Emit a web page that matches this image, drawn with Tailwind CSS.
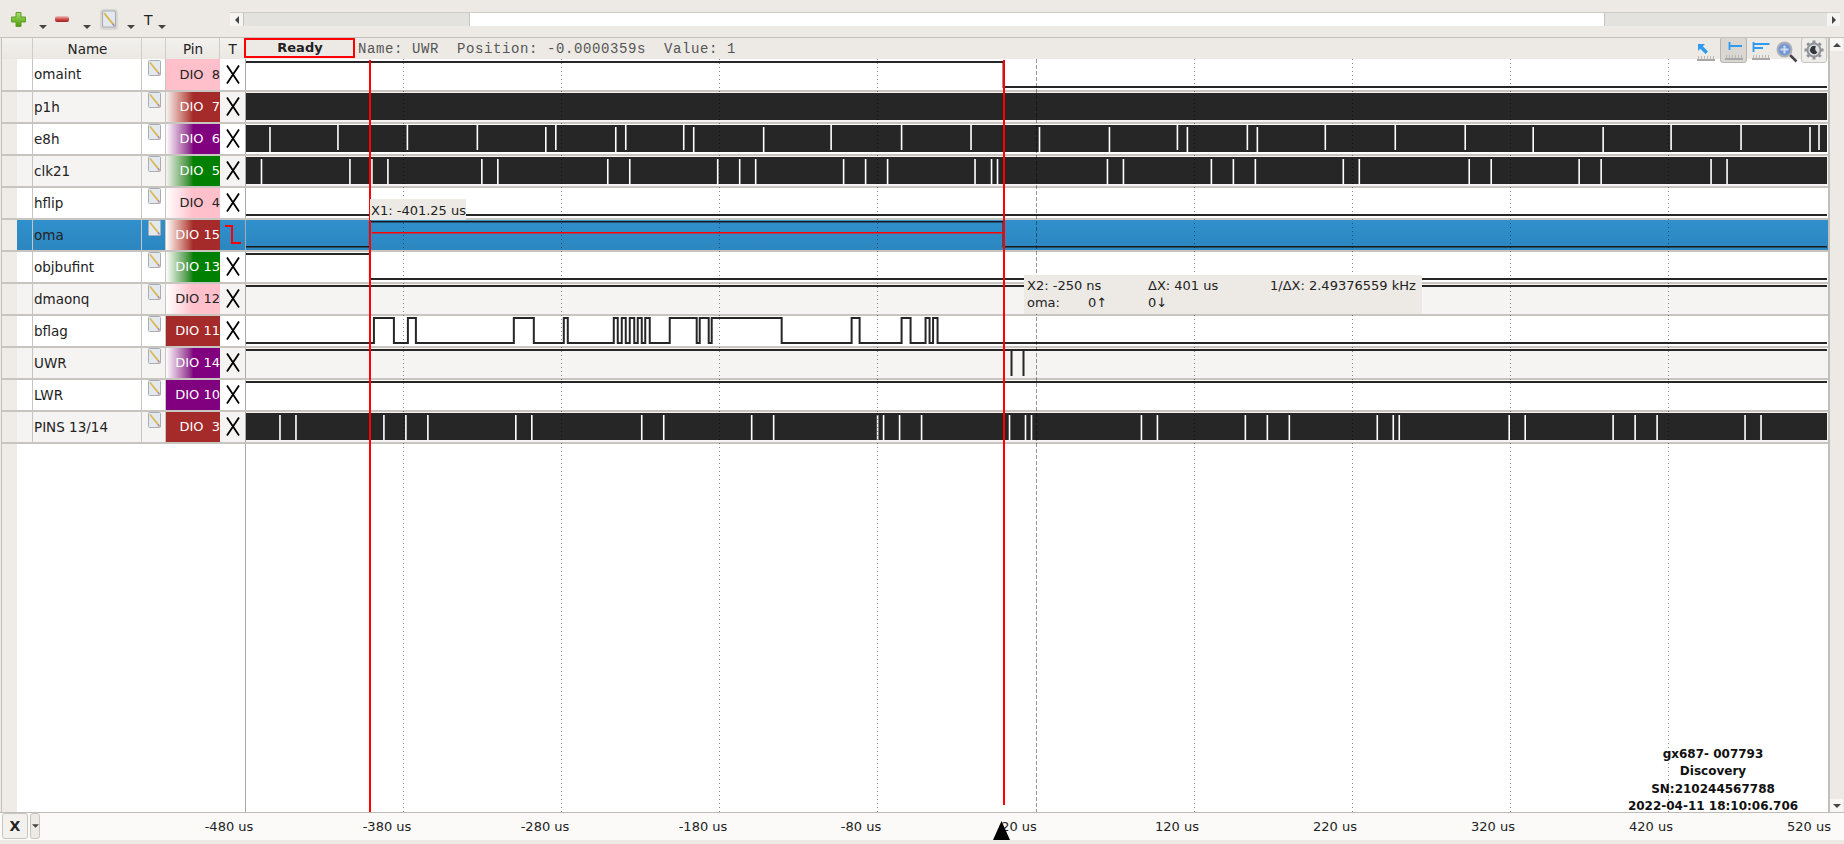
<!DOCTYPE html>
<html lang="en">
<head>
  <meta charset="UTF-8">
  <title>Logic analyzer</title>
  <script src="https://cdn.jsdelivr.net/npm/@tailwindcss/browser@4"></script>
</head>
<body class="w-[1844px] h-[844px] overflow-hidden bg-[#edeae5] text-[#222] font-['DejaVu_Sans',sans-serif]">
  <!-- shared icons -->
  <svg class="absolute w-0 h-0">
    <defs>
      <linearGradient id="gplus" x1="0" y1="0" x2="0" y2="1"><stop offset="0" stop-color="#a6e06a"/><stop offset="1" stop-color="#4e9a06"/></linearGradient>
      <linearGradient id="gminus" x1="0" y1="0" x2="0" y2="1"><stop offset="0" stop-color="#f0c8c8"/><stop offset=".5" stop-color="#d05050"/><stop offset="1" stop-color="#a02020"/></linearGradient>
      <symbol id="note" viewBox="0 0 13 16">
        <rect x=".5" y=".5" width="12" height="15" rx="1" fill="#e3e9ee" stroke="#a9adb3"/>
        <path d="M2 2.5 10.5 13" stroke="#d9b94e" stroke-width="1.8"/>
        <path d="M10 12.5 11.5 14.5" stroke="#a98ab0" stroke-width="1.5"/>
      </symbol>
      <symbol id="x" viewBox="0 0 14 19">
        <path d="M1 0.500 13 18.500M13 0.500 1 18.500" stroke="#000" stroke-width="1.8" fill="none"/>
      </symbol>
      <symbol id="ruler" viewBox="0 0 18 5">
        <rect x="0" y="3" width="18" height="2" fill="#a8a8a8"/>
        <path d="M1.500 0V3M4.500 0V3M7.500 0V3M10.500 0V3M13.500 0V3M16.500 0V3" stroke="#b8b8b8"/>
      </symbol>
      <symbol id="drop" viewBox="0 0 8 4"><path d="M0 0H8L4 4Z" fill="#444"/></symbol>
    </defs>
  </svg>

  <!-- toolbar -->
  <div class="flex h-[37px]">
    <div class="flex w-[230px] shrink-0 items-center">
      <svg class="ml-[11px] w-[15px] h-[15px] shrink-0 mt-[1px]" viewBox="0 0 15 15"><path d="M5 .5H10V5H14.500V10H10V14.500H5V10H.5V5H5Z" fill="url(#gplus)" stroke="#5f9e2a"/></svg>
      <svg class="ml-[13px] w-[8px] h-[4px] mt-[17px] shrink-0"><use href="#drop"/></svg>
      <svg class="ml-[8px] w-[14px] h-[6px] mt-[1px] shrink-0" viewBox="0 0 14 6"><rect width="14" height="6" rx="2" fill="url(#gminus)"/></svg>
      <svg class="ml-[14px] w-[8px] h-[4px] mt-[17px] shrink-0"><use href="#drop"/></svg>
      <div class="ml-[9px] w-[18px] h-[21px] shrink-0 mt-[1px] rounded-sm bg-[#dad7d2] flex items-center justify-center">
        <svg class="w-[14px] h-[18px]"><use href="#note"/></svg>
      </div>
      <svg class="ml-[9px] w-[8px] h-[4px] mt-[17px] shrink-0"><use href="#drop"/></svg>
      <span class="ml-[9px] w-[9px] text-sm leading-none mt-[2px]">T</span>
      <svg class="ml-[5px] w-[8px] h-[4px] mt-[17px] shrink-0"><use href="#drop"/></svg>
    </div>
    <div class="mt-[12px] flex h-[14px] w-[1610px] border-t border-[#cfccc7]">
      <div class="flex w-[13px] items-center justify-center bg-[#f5f4f2]"><svg class="w-[4px] h-[8px]" viewBox="0 0 4 8"><path d="M4 0V8L0 4Z" fill="#444"/></svg></div>
      <div class="w-[227px] bg-[#e3e2de] border-l border-r border-[#c8c5c0]"></div>
      <div class="w-[1134px] bg-white"></div>
      <div class="flex-1 bg-[#e3e2de] border-l border-[#c8c5c0]"></div>
      <div class="flex w-[13px] items-center justify-center bg-[#f5f4f2]"><svg class="w-[4px] h-[8px]" viewBox="0 0 4 8"><path d="M0 0V8L4 4Z" fill="#444"/></svg></div>
    </div>
  </div>

  <!-- main area -->
  <div class="flex h-[775px] border-t border-[#c4c1bc]">
    <div class="relative w-[1827px] h-[774px] ml-px border-l border-[#c4c1bc] bg-white overflow-hidden">
      <!-- header -->
      <div class="flex h-[21px] text-[13px] bg-[#edeae5]">
        <div class="w-[31px] border-r border-[#d0cdc8] bg-linear-to-b from-[#f3f1ee] to-[#ebe8e3]"></div>
        <div class="w-[109px] border-r border-[#d0cdc8] bg-linear-to-b from-[#f3f1ee] to-[#ebe8e3] pl-px text-center text-[13.5px] leading-[22px]">Name</div>
        <div class="w-[24px] border-r border-[#d0cdc8] bg-linear-to-b from-[#f3f1ee] to-[#ebe8e3]"></div>
        <div class="w-[54px] border-r border-[#d0cdc8] bg-linear-to-b from-[#f3f1ee] to-[#ebe8e3] pl-px text-center text-[13.5px] leading-[22px]">Pin</div>
        <div class="w-[24px] bg-linear-to-b from-[#f3f1ee] to-[#ebe8e3] pl-px text-center text-[13.5px] leading-[22px]">T</div>
        <div class="w-[111px] h-[20px] border-2 border-[#f00] pl-px text-center font-bold leading-[16px]">Ready</div>
        <div class="ml-[3px] font-['Liberation_Mono',monospace] text-[14px] tracking-[0.6px] whitespace-pre leading-[22px] text-[#555]">Name: UWR  Position: -0.0000359s  Value: 1</div>
      </div>

      <!-- rows -->
      <div class="flex h-[33px] border-b-2 border-[#c8c5c0] bg-white">
        <div class="w-[15px] bg-[#efebe7]"></div><div class="w-[16px] border-r border-[#c8c5c0]"></div>
        <div class="w-[109px] border-r border-[#c8c5c0] pl-px text-[13.5px] leading-[31px]">omaint</div>
        <div class="w-[24px] border-r border-[#c8c5c0] pl-[6px] pt-px"><svg class="w-[13px] h-[16px]"><use href="#note"/></svg></div>
        <div class="w-[54px] bg-[#ffc0cb] text-right text-[13px] leading-[31px] whitespace-pre">DIO  8</div>
        <div class="w-[25px] pl-[6px] pt-[6px]"><svg class="w-[14px] h-[19px]"><use href="#x"/></svg></div>
        <svg class="w-[1582px] border-l border-[#aaa]" viewBox="245 59 1582 31"><path d="M245 62H1003V87H1827" fill="none" stroke="#262626" stroke-width="2"/></svg>
      </div>
      <div class="flex h-[32px] border-b-2 border-[#c8c5c0] bg-[#f5f4f2]">
        <div class="w-[15px] bg-[#efebe7]"></div><div class="w-[16px] border-r border-[#c8c5c0]"></div>
        <div class="w-[109px] border-r border-[#c8c5c0] pl-px text-[13.5px] leading-[30px]">p1h</div>
        <div class="w-[24px] border-r border-[#c8c5c0] pl-[6px]"><svg class="w-[13px] h-[16px]"><use href="#note"/></svg></div>
        <div class="w-[54px] bg-linear-to-r from-[#f5f4f2] to-[#a52a2a] to-50% text-white text-right text-[13px] leading-[30px] whitespace-pre">DIO  7</div>
        <div class="w-[25px] pl-[6px] pt-[5px]"><svg class="w-[14px] h-[19px]"><use href="#x"/></svg></div>
        <svg class="w-[1582px] border-l border-[#aaa]" viewBox="245 92 1582 30"><rect x="245" y="93" width="1582" height="27" fill="#262626"/></svg>
      </div>
      <div class="flex h-[32px] border-b-2 border-[#c8c5c0] bg-white">
        <div class="w-[15px] bg-[#efebe7]"></div><div class="w-[16px] border-r border-[#c8c5c0]"></div>
        <div class="w-[109px] border-r border-[#c8c5c0] pl-px text-[13.5px] leading-[30px]">e8h</div>
        <div class="w-[24px] border-r border-[#c8c5c0] pl-[6px]"><svg class="w-[13px] h-[16px]"><use href="#note"/></svg></div>
        <div class="w-[54px] bg-linear-to-r from-white to-[#800080] to-50% text-white text-right text-[13px] leading-[30px] whitespace-pre">DIO  6</div>
        <div class="w-[25px] pl-[6px] pt-[5px]"><svg class="w-[14px] h-[19px]"><use href="#x"/></svg></div>
        <svg class="w-[1582px] border-l border-[#aaa]" viewBox="245 124 1582 30">
          <rect x="245" y="125" width="1582" height="27" fill="#262626"/>
          <path d="M337 125V150M406.500 125V150M476.500 125V150M555 125V150M625 125V150M683 125V150M830.500 125V150M901 125V150M970.500 125V150M1177 125V150M1247 125V150M1325 125V150M1395 125V150M1465 125V150M1671 125V150M1741 125V150M1819 125V150" stroke="#fff" stroke-width="1.6"/>
          <path d="M269 127V152M545 127V152M615 127V152M693 127V152M763 127V152M1039 127V152M1109 127V152M1187 127V152M1257 127V152M1533 127V152M1603 127V152M1810 127V152" stroke="#fff" stroke-width="1.6"/>
        </svg>
      </div>
      <div class="flex h-[32px] border-b-2 border-[#c8c5c0] bg-[#f5f4f2]">
        <div class="w-[15px] bg-[#efebe7]"></div><div class="w-[16px] border-r border-[#c8c5c0]"></div>
        <div class="w-[109px] border-r border-[#c8c5c0] pl-px text-[13.5px] leading-[30px]">clk21</div>
        <div class="w-[24px] border-r border-[#c8c5c0] pl-[6px]"><svg class="w-[13px] h-[16px]"><use href="#note"/></svg></div>
        <div class="w-[54px] bg-linear-to-r from-[#f5f4f2] to-[#008000] to-50% text-white text-right text-[13px] leading-[30px] whitespace-pre">DIO  5</div>
        <div class="w-[25px] pl-[6px] pt-[5px]"><svg class="w-[14px] h-[19px]"><use href="#x"/></svg></div>
        <svg class="w-[1582px] border-l border-[#aaa]" viewBox="245 156 1582 30">
          <rect x="245" y="157" width="1582" height="27" fill="#262626"/>
          <path d="M260.500 159V184M349 159V184M371 159V184M387 159V184M481 159V184M497 159V184M607 159V184M629 159V184M717 159V184M739 159V184M755 159V184M843 159V184M865 159V184M887 159V184M974.500 159V184M991 159V184M997 159V184M1107 159V184M1123 159V184M1211 159V184M1233 159V184M1255 159V184M1343 159V184M1359 159V184M1469 159V184M1491 159V184M1579 159V184M1601 159V184M1711 159V184M1727 159V184" stroke="#fff" stroke-width="1.6"/>
        </svg>
      </div>
      <div class="flex h-[32px] border-b-2 border-[#c8c5c0] bg-white">
        <div class="w-[15px] bg-[#efebe7]"></div><div class="w-[16px] border-r border-[#c8c5c0]"></div>
        <div class="w-[109px] border-r border-[#c8c5c0] pl-px text-[13.5px] leading-[30px]">hflip</div>
        <div class="w-[24px] border-r border-[#c8c5c0] pl-[6px]"><svg class="w-[13px] h-[16px]"><use href="#note"/></svg></div>
        <div class="w-[54px] bg-linear-to-r from-white to-[#ffc0cb] to-50% text-right text-[13px] leading-[30px] whitespace-pre">DIO  4</div>
        <div class="w-[25px] pl-[6px] pt-[5px]"><svg class="w-[14px] h-[19px]"><use href="#x"/></svg></div>
        <svg class="w-[1582px] border-l border-[#aaa]" viewBox="245 188 1582 30"><path d="M245 215H1827" stroke="#262626" stroke-width="2"/></svg>
      </div>
      <div class="flex h-[32px] border-b-2 border-[#c8c5c0] bg-linear-to-b from-[#3090cc] to-[#2c86c0]">
        <div class="w-[15px] bg-[#efebe7]"></div><div class="w-[16px] border-r border-[#c8c5c0]"></div>
        <div class="w-[109px] border-r border-[#c8c5c0] pl-px text-[13.5px] leading-[30px]">oma</div>
        <div class="w-[24px] border-r border-[#c8c5c0] pl-[6px]"><svg class="w-[13px] h-[16px]"><use href="#note"/></svg></div>
        <div class="w-[54px] bg-linear-to-r from-white to-[#a52a2a] to-50% text-white text-right text-[13px] leading-[30px] whitespace-pre">DIO 15</div>
        <svg class="w-[25px]" viewBox="220 220 25 30"><path d="M225 226H232V243H241" fill="none" stroke="#f00" stroke-width="2"/></svg>
        <svg class="w-[1582px] border-l border-[#aaa]" viewBox="245 220 1582 30">
          <path d="M245 246.750H368.750V221.750H1002.750V246.750H1827" fill="none" stroke="#1a1a1a" stroke-width="1.500"/>
          <path d="M371 232.750H1003" stroke="#f00" stroke-width="1.500"/>
        </svg>
      </div>
      <div class="flex h-[32px] border-b-2 border-[#c8c5c0] bg-white">
        <div class="w-[15px] bg-[#efebe7]"></div><div class="w-[16px] border-r border-[#c8c5c0]"></div>
        <div class="w-[109px] border-r border-[#c8c5c0] pl-px text-[13.5px] leading-[30px]">objbufint</div>
        <div class="w-[24px] border-r border-[#c8c5c0] pl-[6px]"><svg class="w-[13px] h-[16px]"><use href="#note"/></svg></div>
        <div class="w-[54px] bg-linear-to-r from-white to-[#008000] to-50% text-white text-right text-[13px] leading-[30px] whitespace-pre">DIO 13</div>
        <div class="w-[25px] pl-[6px] pt-[5px]"><svg class="w-[14px] h-[19px]"><use href="#x"/></svg></div>
        <svg class="w-[1582px] border-l border-[#aaa]" viewBox="245 252 1582 30"><path d="M245 254H369V279H1827" fill="none" stroke="#262626" stroke-width="2"/></svg>
      </div>
      <div class="flex h-[32px] border-b-2 border-[#c8c5c0] bg-[#f5f4f2]">
        <div class="w-[15px] bg-[#efebe7]"></div><div class="w-[16px] border-r border-[#c8c5c0]"></div>
        <div class="w-[109px] border-r border-[#c8c5c0] pl-px text-[13.5px] leading-[30px]">dmaonq</div>
        <div class="w-[24px] border-r border-[#c8c5c0] pl-[6px]"><svg class="w-[13px] h-[16px]"><use href="#note"/></svg></div>
        <div class="w-[54px] bg-linear-to-r from-white to-[#ffc0cb] to-50% text-right text-[13px] leading-[30px] whitespace-pre">DIO 12</div>
        <div class="w-[25px] pl-[6px] pt-[5px]"><svg class="w-[14px] h-[19px]"><use href="#x"/></svg></div>
        <svg class="w-[1582px] border-l border-[#aaa]" viewBox="245 284 1582 30"><path d="M245 286H1827" stroke="#262626" stroke-width="2"/></svg>
      </div>
      <div class="flex h-[32px] border-b-2 border-[#c8c5c0] bg-white">
        <div class="w-[15px] bg-[#efebe7]"></div><div class="w-[16px] border-r border-[#c8c5c0]"></div>
        <div class="w-[109px] border-r border-[#c8c5c0] pl-px text-[13.5px] leading-[30px]">bflag</div>
        <div class="w-[24px] border-r border-[#c8c5c0] pl-[6px]"><svg class="w-[13px] h-[16px]"><use href="#note"/></svg></div>
        <div class="w-[54px] bg-[#a52a2a] text-white text-right text-[13px] leading-[30px] whitespace-pre">DIO 11</div>
        <div class="w-[25px] pl-[6px] pt-[5px]"><svg class="w-[14px] h-[19px]"><use href="#x"/></svg></div>
        <svg class="w-[1582px] border-l border-[#aaa]" viewBox="245 316 1582 30"><path d="M245 343H373V318H393V343H407V318H415V343H513V318H533V343H563V318H567V343H613V318H617V343H621V318H625V343H629V318H633.500V343H637V318H641V343H644.500V318H649V343H669V318H696V343H699V318H708V343H711V318H781V343H851V318H859V343H901V318H910V343H925V318H929V343H932.500V318H937V343H1827" fill="none" stroke="#262626" stroke-width="2"/></svg>
      </div>
      <div class="flex h-[32px] border-b-2 border-[#c8c5c0] bg-[#f5f4f2]">
        <div class="w-[15px] bg-[#efebe7]"></div><div class="w-[16px] border-r border-[#c8c5c0]"></div>
        <div class="w-[109px] border-r border-[#c8c5c0] pl-px text-[13.5px] leading-[30px]">UWR</div>
        <div class="w-[24px] border-r border-[#c8c5c0] pl-[6px]"><svg class="w-[13px] h-[16px]"><use href="#note"/></svg></div>
        <div class="w-[54px] bg-linear-to-r from-white to-[#800080] to-50% text-white text-right text-[13px] leading-[30px] whitespace-pre">DIO 14</div>
        <div class="w-[25px] pl-[6px] pt-[5px]"><svg class="w-[14px] h-[19px]"><use href="#x"/></svg></div>
        <svg class="w-[1582px] border-l border-[#aaa]" viewBox="245 348 1582 30"><path d="M245 350H1827M1011 350V376M1023 350V376" fill="none" stroke="#262626" stroke-width="2"/></svg>
      </div>
      <div class="flex h-[32px] border-b-2 border-[#c8c5c0] bg-white">
        <div class="w-[15px] bg-[#efebe7]"></div><div class="w-[16px] border-r border-[#c8c5c0]"></div>
        <div class="w-[109px] border-r border-[#c8c5c0] pl-px text-[13.5px] leading-[30px]">LWR</div>
        <div class="w-[24px] border-r border-[#c8c5c0] pl-[6px]"><svg class="w-[13px] h-[16px]"><use href="#note"/></svg></div>
        <div class="w-[54px] bg-[#800080] text-white text-right text-[13px] leading-[30px] whitespace-pre">DIO 10</div>
        <div class="w-[25px] pl-[6px] pt-[5px]"><svg class="w-[14px] h-[19px]"><use href="#x"/></svg></div>
        <svg class="w-[1582px] border-l border-[#aaa]" viewBox="245 380 1582 30"><path d="M245 382H1827" stroke="#262626" stroke-width="2"/></svg>
      </div>
      <div class="flex h-[32px] border-b-2 border-[#c8c5c0] bg-[#f5f4f2]">
        <div class="w-[15px] bg-[#efebe7]"></div><div class="w-[16px] border-r border-[#c8c5c0]"></div>
        <div class="w-[109px] border-r border-[#c8c5c0] pl-px text-[13.5px] leading-[30px]">PINS 13/14</div>
        <div class="w-[24px] border-r border-[#c8c5c0] pl-[6px]"><svg class="w-[13px] h-[16px]"><use href="#note"/></svg></div>
        <div class="w-[54px] bg-[#a52a2a] text-white text-right text-[13px] leading-[30px] whitespace-pre">DIO  3</div>
        <div class="w-[25px] pl-[6px] pt-[5px]"><svg class="w-[14px] h-[19px]"><use href="#x"/></svg></div>
        <svg class="w-[1582px] border-l border-[#aaa]" viewBox="245 412 1582 30">
          <rect x="245" y="413" width="1582" height="27" fill="#262626"/>
          <path d="M279 415V440M295 415V440M383 415V440M405 415V440M427 415V440M515 415V440M531 415V440M641 415V440M663 415V440M751 415V440M773 415V440M877 415V440M883 415V440M899 415V440M921 415V440M1009 415V440M1025 415V440M1031 415V440M1141 415V440M1157 415V440M1245 415V440M1267 415V440M1289 415V440M1377 415V440M1393 415V440M1399 415V440M1509 415V440M1525 415V440M1613 415V440M1635 415V440M1657 415V440M1745 415V440M1761 415V440" stroke="#fff" stroke-width="1.6"/>
        </svg>
      </div>
      <!-- empty space under the rows -->
      <div class="flex h-[368px]">
        <div class="w-[15px] bg-[#efebe7]"></div>
        <div class="ml-[228px] border-l border-[#aaa]"></div>
      </div>

      <!-- grid and cursors over the traces -->
      <svg class="absolute left-[243px] top-[21px] w-[1582px] h-[753px] pointer-events-none" viewBox="245 59 1582 753">
        <path d="M403.500 59V812M561.500 59V812M719.500 59V812M877.500 59V812M1194.500 59V812M1352.500 59V812M1510.500 59V812M1668.500 59V812" stroke="#000" stroke-opacity=".45" stroke-dasharray="1 3"/>
        <path d="M1036.500 59V812" stroke="#000" stroke-opacity=".4" stroke-dasharray="4 2"/>
        <path d="M370 60V812M1004 60V805" stroke="#f00" stroke-width="2"/>
      </svg>

      <div class="absolute left-[368px] top-[161px] h-[21px] w-[96px] bg-[#edeae5] pl-px text-[13px] leading-[23px] whitespace-pre">X1: -401.25 us</div>
      <div class="absolute left-[1022px] top-[237px] h-[39px] w-[398px] bg-[#edeae5] pl-[3px] pt-[2px] text-[13px] leading-[17px]">
        <div class="grid grid-cols-[121px_122px_auto]"><span>X2: -250 ns</span><span>ΔX: 401 us</span><span>1/ΔX: 2.49376559 kHz</span></div>
        <div class="grid grid-cols-[121px_122px_auto]"><span class="flex"><span class="w-[61px]">oma:</span><span>0↑</span></span><span>0↓</span></div>
      </div>
      <div class="absolute left-[1601px] top-[708px] w-[220px] text-center text-xs font-bold leading-[17.3px] text-[#111]">gx687- 007793<br>Discovery<br>SN:210244567788<br>2022-04-11 18:10:06.706</div>

      <!-- measure tools in the header -->
      <div class="absolute left-[1695px] top-[-1px] flex h-[26px] items-center">
        <svg class="w-[18px] h-[18px] mt-[4px]" viewBox="0 0 18 18"><path d="M1 1H8L5.800 3.200 11 8.500 8.500 11 3.200 5.800 1 8Z" fill="#2f9bf0"/><use href="#ruler" y="13" width="18" height="5"/></svg>
        <div class="ml-[5px] flex h-[26px] w-[27px] items-center justify-center rounded-[3px] border border-[#b8b5b0] bg-[#dad7d2]">
          <svg class="w-[18px] h-[18px] mt-[2px]" viewBox="0 0 18 18"><path d="M4.500 0V8M4.500 4H17" fill="none" stroke="#2f9bf0" stroke-width="1.800"/><use href="#ruler" y="13" width="18" height="5"/></svg>
        </div>
        <svg class="ml-[5px] w-[18px] h-[18px] mt-[2px]" viewBox="0 0 18 18"><path d="M1.500 0V10M1.500 2H17.500M1.500 6H11" fill="none" stroke="#2f9bf0" stroke-width="1.800"/><use href="#ruler" y="13" width="18" height="5"/></svg>
        <svg class="ml-[6px] w-[22px] h-[22px] mt-[3px]" viewBox="0 0 22 22">
          <path d="M14 14 20.500 20.500" stroke="#444" stroke-width="2.500"/>
          <circle cx="8.500" cy="8.500" r="7" fill="#7396d4" stroke="#aeb0b4" stroke-width="2"/>
          <path d="M8.500 4.500V12.500M4.500 8.500H12.500" stroke="#cfdcf2" stroke-width="2"/>
        </svg>
        <div class="ml-[3px] flex h-[26px] w-[26px] items-center justify-center rounded-[3px] border border-[#c8c5c0] bg-[#efedea]">
          <svg class="w-[20px] h-[20px]" viewBox="0 0 20 20">
            <path d="M10 .5V3M10 17V19.500M.5 10H3M17 10H19.500M3.300 3.300 5 5M15 15 16.700 16.700M3.300 16.700 5 15M15 5 16.700 3.300" stroke="#8f9296" stroke-width="3"/>
            <circle cx="10" cy="10" r="6.500" fill="#dfe1e3" stroke="#8f9296" stroke-width="2"/>
            <path d="M12 6.500A4 4 0 1 0 13.500 12 3.500 3.500 0 0 1 12 6.500Z" fill="#33373b"/>
          </svg>
        </div>
      </div>
    </div>

    <!-- vertical scrollbar -->
    <div class="flex h-[774px] w-[15px] flex-col justify-between border-l-2 border-[#c2bfba] bg-[#edeae5]">
      <div class="flex h-[13px] w-[13px] items-center justify-center bg-[#f7f6f4]"><svg class="w-[8px] h-[4px]" viewBox="0 0 8 4"><path d="M0 4H8L4 0Z" fill="#444"/></svg></div>
      <div class="flex h-[13px] w-[13px] items-center justify-center bg-[#f7f6f4]"><svg class="w-[8px] h-[4px]"><use href="#drop"/></svg></div>
    </div>
  </div>

  <!-- time axis -->
  <div class="relative flex h-[28px] border-t border-[#bfbcb7] bg-[#fbfaf9] text-[13px] leading-[28px]">
    <div class="ml-[2px] flex h-[26px] w-[26px] shrink-0 items-center justify-center rounded-[3px] border border-[#c8c5c0] bg-[#f3f1ee] text-sm font-bold">X</div>
    <div class="ml-[2px] flex h-[26px] w-[10px] shrink-0 items-center justify-center rounded-[3px] border border-[#c8c5c0] bg-[#edeae5]"><svg class="w-[7px] h-[4px]"><use href="#drop"/></svg></div>
    <div class="ml-[110px] flex shrink-0 text-center whitespace-pre">
      <span class="w-[158px]">-480 us</span><span class="w-[158px]">-380 us</span><span class="w-[158px]">-280 us</span><span class="w-[158px]">-180 us</span><span class="w-[158px]">-80 us</span><span class="w-[158px]">20 us</span><span class="w-[158px]">120 us</span><span class="w-[158px]">220 us</span><span class="w-[158px]">320 us</span><span class="w-[158px]">420 us</span><span class="w-[158px]">520 us</span>
    </div>
    <svg class="absolute left-[993px] top-[8px] w-[17px] h-[19px]" viewBox="0 0 17 19"><path d="M8.500 0 17 19H0Z" fill="#000"/></svg>
  </div>
</body>
</html>
